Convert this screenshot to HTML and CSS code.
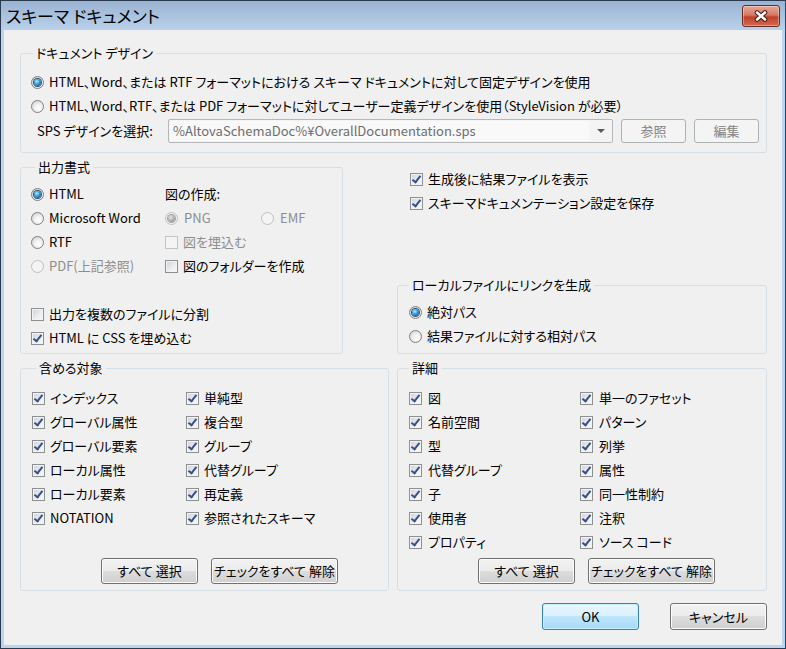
FILE: index.html
```html
<!DOCTYPE html>
<html lang="ja">
<head>
  <meta charset="UTF-8">
  <meta name="viewport" content="width=device-width, initial-scale=1.0">
  <title>スキーマ ドキュメント</title>
  <link rel="stylesheet" href="styles.css">
</head>
<body>
  <div class="window">
    <div class="titlebar">
      <span class="title">スキーマ ドキュメント</span>
      <span class="close-btn">
        <svg width="16" height="12" viewBox="0 0 16 12">
          <path d="M4 2.5 L12 9.5 M12 2.5 L4 9.5" stroke="#4a1c13" stroke-width="4.6" stroke-linecap="round"/>
          <path d="M4 2.5 L12 9.5 M12 2.5 L4 9.5" stroke="#fff" stroke-width="2.6" stroke-linecap="round"/>
        </svg>
      </span>
    </div>

    <div class="content">
      <!-- Document design -->
      <div class="group design">
        <div class="group-title">ドキュメント デザイン</div>
        <div class="row first"><span class="radio on"></span><span>HTML、Word、または RTF フォーマットにおける スキーマ ドキュメントに対して固定デザインを使用</span></div>
        <div class="row"><span class="radio"></span><span>HTML、Word、RTF、または PDF フォーマットに対してユーザー定義デザインを使用（StyleVision が必要）</span></div>
        <div class="sps-row">
          <span class="sps-label">SPS デザインを選択:</span>
          <div class="combo">
            <span class="combo-text">%AltovaSchemaDoc%¥OverallDocumentation.sps</span>
            <span class="combo-arrow"></span>
          </div>
          <button class="btn small disabled">参照</button>
          <button class="btn small disabled">編集</button>
        </div>
      </div>

      <div class="middle">
        <!-- Output format -->
        <div class="group output">
          <div class="group-title">出力書式</div>
          <div class="output-grid">
            <div class="row"><span class="radio on"></span><span>HTML</span></div>
            <div class="row"><span>図の作成:</span></div>
            <div class="row"><span class="radio"></span><span>Microsoft Word</span></div>
            <div class="row">
              <span class="pair disabled"><span class="radio on dis"></span><span>PNG</span></span>
              <span class="pair disabled"><span class="radio dis"></span><span>EMF</span></span>
            </div>
            <div class="row"><span class="radio"></span><span>RTF</span></div>
            <div class="row disabled"><span class="check dis"></span><span>図を埋込む</span></div>
            <div class="row disabled"><span class="radio dis"></span><span>PDF(上記参照)</span></div>
            <div class="row"><span class="check"></span><span>図のフォルダーを作成</span></div>
          </div>
          <div class="row split"><span class="check"></span><span>出力を複数のファイルに分割</span></div>
          <div class="row"><span class="check on"></span><span>HTML に CSS を埋め込む</span></div>
        </div>

        <div class="side">
          <div class="side-checks">
            <div class="row"><span class="check on"></span><span>生成後に結果ファイルを表示</span></div>
            <div class="row"><span class="check on"></span><span>スキーマドキュメンテーション設定を保存</span></div>
          </div>
          <!-- Links to local files -->
          <div class="group local">
            <div class="group-title">ローカルファイルにリンクを生成</div>
            <div class="row first"><span class="radio on"></span><span>絶対パス</span></div>
            <div class="row"><span class="radio"></span><span>結果ファイルに対する相対パス</span></div>
          </div>
        </div>
      </div>

      <div class="lower">
        <!-- Include -->
        <div class="group include">
          <div class="group-title">含める対象</div>
          <div class="check-grid">
            <div class="row"><span class="check on"></span><span>インデックス</span></div>
            <div class="row"><span class="check on"></span><span>単純型</span></div>
            <div class="row"><span class="check on"></span><span>グローバル属性</span></div>
            <div class="row"><span class="check on"></span><span>複合型</span></div>
            <div class="row"><span class="check on"></span><span>グローバル要素</span></div>
            <div class="row"><span class="check on"></span><span>グループ</span></div>
            <div class="row"><span class="check on"></span><span>ローカル属性</span></div>
            <div class="row"><span class="check on"></span><span>代替グループ</span></div>
            <div class="row"><span class="check on"></span><span>ローカル要素</span></div>
            <div class="row"><span class="check on"></span><span>再定義</span></div>
            <div class="row"><span class="check on"></span><span>NOTATION</span></div>
            <div class="row"><span class="check on"></span><span>参照されたスキーマ</span></div>
          </div>
          <div class="group-buttons">
            <button class="btn select-all">すべて 選択</button>
            <button class="btn clear-all">チェックをすべて 解除</button>
          </div>
        </div>

        <!-- Details -->
        <div class="group details">
          <div class="group-title">詳細</div>
          <div class="check-grid">
            <div class="row"><span class="check on"></span><span>図</span></div>
            <div class="row"><span class="check on"></span><span>単一のファセット</span></div>
            <div class="row"><span class="check on"></span><span>名前空間</span></div>
            <div class="row"><span class="check on"></span><span>パターン</span></div>
            <div class="row"><span class="check on"></span><span>型</span></div>
            <div class="row"><span class="check on"></span><span>列挙</span></div>
            <div class="row"><span class="check on"></span><span>代替グループ</span></div>
            <div class="row"><span class="check on"></span><span>属性</span></div>
            <div class="row"><span class="check on"></span><span>子</span></div>
            <div class="row"><span class="check on"></span><span>同一性制約</span></div>
            <div class="row"><span class="check on"></span><span>使用者</span></div>
            <div class="row"><span class="check on"></span><span>注釈</span></div>
            <div class="row"><span class="check on"></span><span>プロパティ</span></div>
            <div class="row"><span class="check on"></span><span>ソース コード</span></div>
          </div>
          <div class="group-buttons">
            <button class="btn select-all">すべて 選択</button>
            <button class="btn clear-all">チェックをすべて 解除</button>
          </div>
        </div>
      </div>

      <div class="footer">
        <button class="btn dialog default">OK</button>
        <button class="btn dialog">キャンセル</button>
      </div>
    </div>
  </div>
</body>
</html>
```

FILE: styles.css
```css
/* Reset */
* {
  box-sizing: border-box;
  margin: 0;
  padding: 0;
}
body {
  width: 786px;
  height: 649px;
  overflow: hidden;
  background: #f0f0f0;
  color: #000;
  font-family: "Noto Sans CJK JP", "Noto Sans", sans-serif;
  font-size: 13px;
  line-height: 18px;
  font-feature-settings: "palt";
}
/* Window frame */
.window {
  width: 786px;
  height: 649px;
  display: flex;
  flex-direction: column;
  border: 1px solid #2a3b4f;
  border-right-color: #17497a;
  background: #bcd4ec;
}
.titlebar {
  flex: none;
  height: 29px;
  display: flex;
  align-items: center;
  justify-content: space-between;
  padding: 0 5px 0 5px;
  background: linear-gradient(#9ab3d2, #b9d1ea);
}
.title {
  font-size: 17px;
  line-height: 22px;
}
.close-btn {
  width: 38px;
  height: 22px;
  display: flex;
  align-items: center;
  justify-content: center;
  border: 1px solid #6b2a20;
  border-radius: 3px;
  background: linear-gradient(#e8a999 0%, #d67a65 45%, #c2402a 55%, #cf6a52 100%);
  box-shadow: inset 0 0 0 1px rgba(255, 255, 255, 0.35);
}
.content {
  flex: 1;
  margin: 0 3px 3px;
  background: #f0f0f0;
  padding: 23px 15px 0 16px;
}
/* Group boxes */
.group {
  border: 1px solid #d5dfe5;
  border-radius: 3px;
}
.group-title {
  width: fit-content;
  height: 18px;
  margin: -10px 0 0 4px;
  padding: 0 3px;
  background: #f0f0f0;
}
.design {
  height: 100px;
  padding-left: 10px;
}
.design .group-title {
  margin-left: 2px;
}
.row {
  display: flex;
  align-items: center;
  gap: 5px;
  height: 24px;
  white-space: nowrap;
}
.row.first {
  margin-top: 8px;
}
.disabled {
  color: #8d8d8d;
}
/* SPS design selector */
.sps-row {
  display: flex;
  align-items: center;
  margin-top: 1px;
  height: 24px;
}
.sps-label {
  width: 131px;
  margin-left: 6px;
}
.combo {
  width: 445px;
  height: 24px;
  display: flex;
  align-items: center;
  border: 1px solid #b4b8bb;
  border-radius: 2px;
  background: #f4f4f4;
  margin-right: 8px;
}
.combo-text {
  flex: 1;
  height: 20px;
  margin: 0 1px;
  padding-left: 3px;
  line-height: 20px;
  color: #6d6d6d;
  background: #f9f9f9;
}
.combo-arrow {
  width: 22px;
  display: flex;
  justify-content: center;
}
.combo-arrow::after {
  content: "";
  border-left: 4px solid transparent;
  border-right: 4px solid transparent;
  border-top: 4px solid #5a5a5a;
}
/* Middle row */
.middle {
  display: flex;
  justify-content: space-between;
  margin-top: 14px;
  height: 187px;
}
.output {
  width: 323px;
  padding-left: 10px;
}
.output-grid {
  display: grid;
  grid-template-columns: 134px 1fr;
  grid-auto-rows: 24px;
  margin-top: 6px;
}
.pair {
  display: flex;
  align-items: center;
  gap: 6px;
  width: 91px;
}
.row.split {
  margin-top: 24px;
}
.side {
  width: 370px;
  display: flex;
  flex-direction: column;
  justify-content: space-between;
}
.side-checks {
  padding-left: 13px;
}
.local {
  height: 69px;
  padding-left: 11px;
}
.local .group-title,
.details .group-title {
  margin-left: 0;
}
.local .row.first {
  margin-top: 6px;
}
/* Lower row */
.lower {
  display: flex;
  justify-content: space-between;
  margin-top: 14px;
  height: 223px;
}
.include,
.details {
  display: flex;
  flex-direction: column;
  padding: 0 0 6px 11px;
}
.include {
  width: 369px;
}
.details {
  width: 370px;
}
.check-grid {
  display: grid;
  grid-auto-rows: 24px;
  margin-top: 9px;
}
.include .check-grid {
  grid-template-columns: 154px 1fr;
}
.details .check-grid {
  grid-template-columns: 171px 1fr;
}
.details .row {
  gap: 6px;
}
.group-buttons {
  display: flex;
  gap: 13px;
  margin-top: auto;
  padding-left: 69px;
}
/* Check boxes */
.check {
  flex: none;
  position: relative;
  width: 13px;
  height: 13px;
  border: 1px solid #8e8f8f;
  background: linear-gradient(135deg, #cdd0d6 0%, #eceef0 60%, #f8f8f8 100%);
  box-shadow: inset 0 0 0 1px #f4f4f4;
}
.check.on::after {
  content: "";
  position: absolute;
  left: 3px;
  top: 0px;
  width: 3px;
  height: 7px;
  border: solid #384f8d;
  border-width: 0 2.5px 2.5px 0;
  transform: rotate(38deg);
}
.check.dis {
  border-color: #c4c4c4;
  background: #f4f4f4;
  box-shadow: none;
}
/* Radio buttons */
.radio {
  flex: none;
  width: 13px;
  height: 13px;
  display: flex;
  align-items: center;
  justify-content: center;
  border: 1px solid #7f7f7f;
  border-radius: 50%;
  background: radial-gradient(circle at 60% 65%, #ffffff 0%, #eeeeee 45%, #c8c8c8 100%);
}
.radio.on::after {
  content: "";
  width: 7px;
  height: 7px;
  border-radius: 50%;
  background: radial-gradient(circle at 40% 35%, #bdeeff 0%, #43aee9 35%, #0d5a9e 80%, #0b3e6e 100%);
  box-shadow: 0 0 0 1px #2b4e6f;
}
.radio.dis {
  border-color: #c0c0c0;
  background: #f4f4f4;
}
.radio.on.dis::after {
  background: radial-gradient(circle at 40% 35%, #e8e8e8 0%, #b0b0b0 50%, #8c8c8c 100%);
  box-shadow: 0 0 0 1px #a0a0a0;
}
/* Buttons */
.btn {
  height: 26px;
  font: inherit;
  color: #000;
  white-space: nowrap;
  border: 1px solid #707070;
  border-radius: 3px;
  background: linear-gradient(#f2f2f2 0%, #ebebeb 50%, #dddddd 50%, #cfcfcf 100%);
  box-shadow: inset 0 0 0 1px #fcfcfc;
}
.btn.small {
  width: 65px;
  height: 24px;
}
.btn.small + .btn.small {
  margin-left: 8px;
}
.btn.disabled {
  color: #838383;
  border-color: #adb2b5;
  background: #f4f4f4;
  box-shadow: none;
}
.select-all {
  width: 97px;
}
.clear-all {
  width: 127px;
}
.footer {
  display: flex;
  justify-content: flex-end;
  gap: 31px;
  margin-top: 12px;
}
.btn.dialog {
  width: 97px;
  height: 27px;
}
.btn.default {
  border-color: #3c7fb1;
  background: linear-gradient(#eaf6fd 0%, #d9f0fc 50%, #bee6fd 50%, #a7d9f5 100%);
  box-shadow: inset 0 0 0 1px #c5f0fd;
}
```
